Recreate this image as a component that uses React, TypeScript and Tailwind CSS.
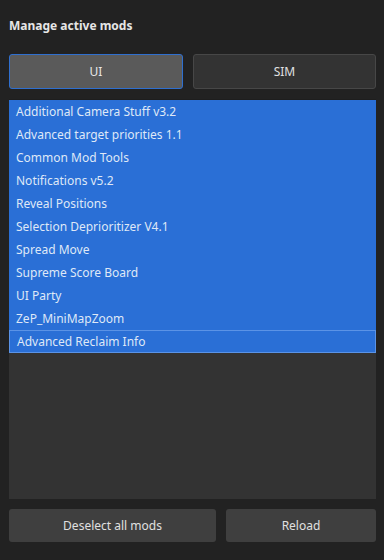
const mods = [
  'Additional Camera Stuff v3.2',
  'Advanced target priorities 1.1',
  'Common Mod Tools',
  'Notifications v5.2',
  'Reveal Positions',
  'Selection Deprioritizer V4.1',
  'Spread Move',
  'Supreme Score Board',
  'UI Party',
  'ZeP_MiniMapZoom',
  'Advanced Reclaim Info',
];

export default function App() {
  return (
    <div
      className="w-[384px] h-[560px] bg-[#222222] px-[9px] pt-[17px] text-[12px] text-[#dcdcdc] flex flex-col"
      style={{ fontFamily: '"Noto Sans", "Open Sans", sans-serif' }}
    >
      <h1 className="font-bold text-[12px] text-[#e6e6e6] leading-[18px]">Manage active mods</h1>

      <div className="flex gap-[10px] mt-[19px] w-[367px]">
        <button className="w-[174px] h-[35px] rounded-[3px] bg-[#5a5a5a] border border-[#2f6fcf] text-[#e8e8e8]">
          UI
        </button>
        <button className="flex-1 h-[35px] rounded-[3px] bg-[#333333] border border-[#474747] text-[#e0e0e0]">
          SIM
        </button>
      </div>

      <div className="mt-[10px] w-[367px] h-[400px] bg-[#333333] border-t border-[#1e1e1e] flex flex-col">
        {mods.map((m, i) => (
          <div
            key={m}
            className={`h-[23px] flex items-center pl-[7px] bg-[#2a6fd6] text-[#dfe8f7] ${
              i === mods.length - 1 ? 'border border-[#5b93e6] pl-[6px]' : ''
            }`}
          >
            {m}
          </div>
        ))}
      </div>

      <div className="flex gap-[10px] mt-[10px] w-[367px]">
        <button className="w-[207px] h-[33px] rounded-[3px] bg-[#3f3f3f] text-[#e0e0e0]">Deselect all mods</button>
        <button className="flex-1 h-[33px] rounded-[3px] bg-[#3f3f3f] text-[#e0e0e0]">Reload</button>
      </div>
    </div>
  );
}
